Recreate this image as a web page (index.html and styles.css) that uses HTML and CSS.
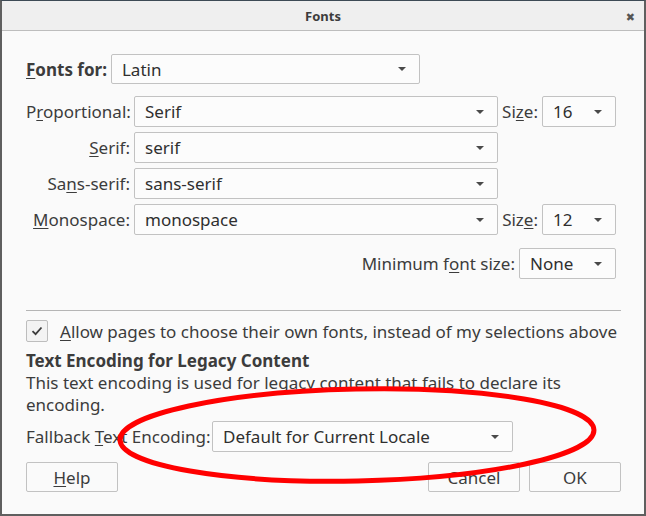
FILE: index.html
```html
<!DOCTYPE html>
<html>
<head>
<meta charset="utf-8">
<link rel="stylesheet" href="styles.css">
</head>
<body>
<div class="window">
  <div class="titlebar">
    <span class="title">Fonts</span>
    <span class="close">✖</span>
  </div>
  <div class="content">
    <div class="fontsfor">
      <span class="label bold"><u>F</u>onts for:</span>
      <div class="select latin"><span>Latin</span><i class="arrow"></i></div>
    </div>
    <div class="fontgrid">
      <span class="label right">P<u>r</u>oportional:</span>
      <div class="select"><span>Serif</span><i class="arrow"></i></div>
      <span class="label right">Si<u>z</u>e:</span>
      <div class="select"><span>16</span><i class="arrow"></i></div>

      <span class="label right"><u>S</u>erif:</span>
      <div class="select"><span>serif</span><i class="arrow"></i></div>
      <span></span><span></span>

      <span class="label right">Sa<u>n</u>s-serif:</span>
      <div class="select"><span>sans-serif</span><i class="arrow"></i></div>
      <span></span><span></span>

      <span class="label right"><u>M</u>onospace:</span>
      <div class="select"><span>monospace</span><i class="arrow"></i></div>
      <span class="label right">Siz<u>e</u>:</span>
      <div class="select"><span>12</span><i class="arrow"></i></div>
    </div>
    <div class="minrow">
      <span class="label">Minimum f<u>o</u>nt size:</span>
      <div class="select minsel"><span>None</span><i class="arrow"></i></div>
    </div>
    <div class="separator"></div>
    <div class="checkrow">
      <span class="checkbox">
        <svg width="12" height="10" viewBox="0 0 12 10"><path d="M1.5 5.2 L4.6 8.2 L10.5 1.5" fill="none" stroke="#3c3c3c" stroke-width="1.8"/></svg>
      </span>
      <span class="label"><u>A</u>llow pages to choose their own fonts, instead of my selections above</span>
    </div>
    <div class="heading">Text Encoding for Legacy Content</div>
    <div class="desc">This text encoding is used for legacy content that fails to declare its encoding.</div>
    <div class="fallback">
      <span class="label fblabel">Fallback <u>T</u>ext Encoding:</span>
      <div class="select encsel"><span>Default for Current Locale</span><i class="arrow"></i></div>
    </div>
    <div class="buttons">
      <button class="btn"><u>H</u>elp</button>
      <span class="spacer"></span>
      <button class="btn">Cancel</button>
      <button class="btn">OK</button>
    </div>
  </div>
  <svg class="annotation" width="646" height="516" viewBox="0 0 646 516">
    <ellipse cx="357" cy="435" rx="237" ry="46" transform="rotate(-1.2 357 435)" fill="none" stroke="#ff0000" stroke-width="5"/>
  </svg>
</div>
</body>
</html>
```
FILE: styles.css
```css
* { box-sizing: border-box; }
html, body {
  margin: 0;
  padding: 0;
  background: #5f5f5f;
}
body {
  font-family: "Noto Sans", "DejaVu Sans", sans-serif;
  font-size: 17px;
  color: #3c3c3c;
}
.window {
  position: relative;
  width: 646px;
  height: 516px;
  border-top: 1px solid #3d4a55;
  border-left: 2px solid #5f5f5f;
  border-right: 2px solid #5f5f5f;
  border-bottom: 2px solid #5f5f5f;
  background: #fafafa;
  display: flex;
  flex-direction: column;
  overflow: hidden;
}
.titlebar {
  height: 30px;
  flex: none;
  background: #efefef;
  border-bottom: 1px solid #bdbdbd;
  position: relative;
  display: flex;
  align-items: center;
  justify-content: center;
}
.title {
  font-weight: bold;
  font-size: 13px;
  color: #3c3c3c;
}
.close {
  position: absolute;
  right: 9px;
  top: 8px;
  font-size: 11px;
  color: #555;
}
.content {
  padding: 23px 22px 0 24px;
  display: flex;
  flex-direction: column;
}
u {
  text-decoration: underline;
  text-underline-offset: 2px;
  text-decoration-thickness: 1px;
}
.label {
  white-space: nowrap;
}
.bold { font-weight: bold; }
.right { text-align: right; }

.select {
  height: 31px;
  border: 1px solid #c2c2c2;
  border-radius: 2px;
  background: #fcfcfc;
  display: flex;
  align-items: center;
  justify-content: space-between;
  padding: 0 13px 0 10px;
  font-size: 17px;
  color: #2f2f2f;
}
.arrow {
  width: 0;
  height: 0;
  border-left: 4.5px solid transparent;
  border-right: 4.5px solid transparent;
  border-top: 4.5px solid #4a4a4a;
}
.fontsfor {
  display: flex;
  align-items: center;
  gap: 4px;
  height: 30px;
}
.fontsfor .select {
  height: 30px;
}
.latin { width: 309px; }

.fontgrid {
  margin-top: 12px;
  display: grid;
  grid-template-columns: 104px 364px 36px 74px;
  grid-auto-rows: 31px;
  column-gap: 4px;
  row-gap: 5px;
  align-items: center;
}
.minrow {
  margin-top: 13px;
  width: 590px;
  display: flex;
  justify-content: flex-end;
  align-items: center;
  gap: 4px;
}
.minsel { width: 97px; }

.separator {
  margin-top: 31px;
  height: 1px;
  background: #b5b5b5;
  width: 595px;
}
.checkrow {
  margin-top: 9px;
  display: flex;
  align-items: center;
  gap: 12px;
  height: 22px;
}
.checkbox {
  width: 22px;
  height: 22px;
  border: 1px solid #bdbdbd;
  border-radius: 2px;
  background: #f3f3f3;
  display: flex;
  align-items: center;
  justify-content: center;
}
.heading {
  margin-top: 8px;
  font-weight: bold;
  line-height: 22px;
}
.desc {
  line-height: 22px;
  width: 560px;
}
.fallback {
  margin-top: 5px;
  display: flex;
  align-items: center;
  gap: 4px;
}
.fblabel {
  flex: none;
  width: 182px;
}
.encsel { width: 301px; }
.buttons {
  margin-top: 10px;
  display: flex;
  gap: 9px;
  width: 595px;
}
.spacer { flex: 1; }
.btn {
  width: 92px;
  height: 30px;
  border: 1px solid #c2c2c2;
  border-radius: 2px;
  background: #fafafa;
  font-family: inherit;
  font-size: 17px;
  color: #3c3c3c;
  padding: 0;
}
.annotation {
  position: absolute;
  left: -2px;
  top: -1px;
  pointer-events: none;
}
```
